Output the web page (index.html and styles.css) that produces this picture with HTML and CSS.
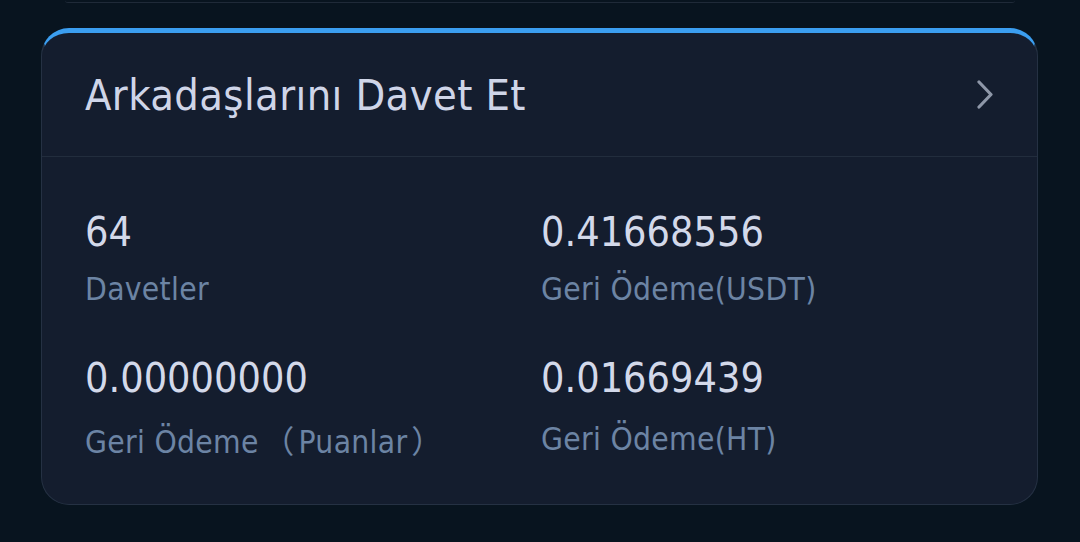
FILE: index.html
```html
<!DOCTYPE html>
<html lang="tr">
  <head>
    <meta charset="UTF-8" />
    <meta name="viewport" content="width=device-width, initial-scale=1.0" />
    <title>Arkadaşlarını Davet Et</title>
    <link rel="stylesheet" href="styles.css">
  </head>
  <body>
    <div class="page">
      <!-- bottom edge of the previous card -->
      <div class="prev-card"></div>

      <!-- Invite card -->
      <div class="invite-card">
        <div class="invite-header">
          <h2>Arkadaşlarını Davet Et</h2>
          <svg class="chevron" width="20" height="30" viewBox="0 0 20 30">
            <path d="M4 2 L16 14.5 L4 27" fill="none" stroke="#8e97a8" stroke-width="3.2" stroke-linecap="round" stroke-linejoin="round" />
          </svg>
        </div>

        <div class="stats">
          <div class="stat">
            <div class="value">64</div>
            <div class="label">Davetler</div>
          </div>
          <div class="stat">
            <div class="value">0.41668556</div>
            <div class="label">Geri Ödeme(USDT)</div>
          </div>
          <div class="stat second-row">
            <div class="value">0.00000000</div>
            <div class="label">Geri Ödeme<span class="wide">（</span>Puanlar<span class="wide">）</span></div>
          </div>
          <div class="stat second-row">
            <div class="value">0.01669439</div>
            <div class="label">Geri Ödeme(HT)</div>
          </div>
        </div>
      </div>
    </div>
  </body>
</html>
```

FILE: styles.css
```css
body {
  font-family: "DejaVu Sans", "Noto Sans", sans-serif;
  font-stretch: condensed;
  background-color: #08141f;
  margin: 0;
  padding: 0;
}

.page {
  width: 1080px;
  height: 542px;
  overflow: hidden;
}

.prev-card {
  margin: 0 65px;
  height: 2px;
  border-bottom: 1px solid #1f2a38;
  border-radius: 0 0 6px 6px;
}

.invite-card {
  margin: 25px 42px 0 41px;
  background-color: #141d2e;
  border: 1px solid #253143;
  border-top: 5px solid #3b9ef0;
  border-radius: 28px;
  height: 477px;
  box-sizing: border-box;
}

.invite-header {
  display: flex;
  align-items: center;
  justify-content: space-between;
  height: 123px;
  padding: 0 42px 0 43px;
  border-bottom: 1px solid #222d3d;
}

.invite-header h2 {
  margin: 0;
  font-size: 43px;
  font-weight: normal;
  color: #cfd5e8;
  letter-spacing: 0.4px;
}

.chevron {
  display: block;
}

.stats {
  display: grid;
  grid-template-columns: 456px 1fr;
  row-gap: 44px;
  padding: 50px 0 0 43px;
}

.value {
  font-size: 41px;
  color: #d3d9ea;
  line-height: 50px;
}

.label {
  margin-top: 12px;
  font-size: 31.5px;
  color: #6c84a4;
  line-height: 40px;
  letter-spacing: 0.3px;
}

.second-row .label {
  margin-top: 16px;
}

.wide {
  font-family: "Noto Sans CJK SC", sans-serif;
  padding: 0 4px;
}
```
